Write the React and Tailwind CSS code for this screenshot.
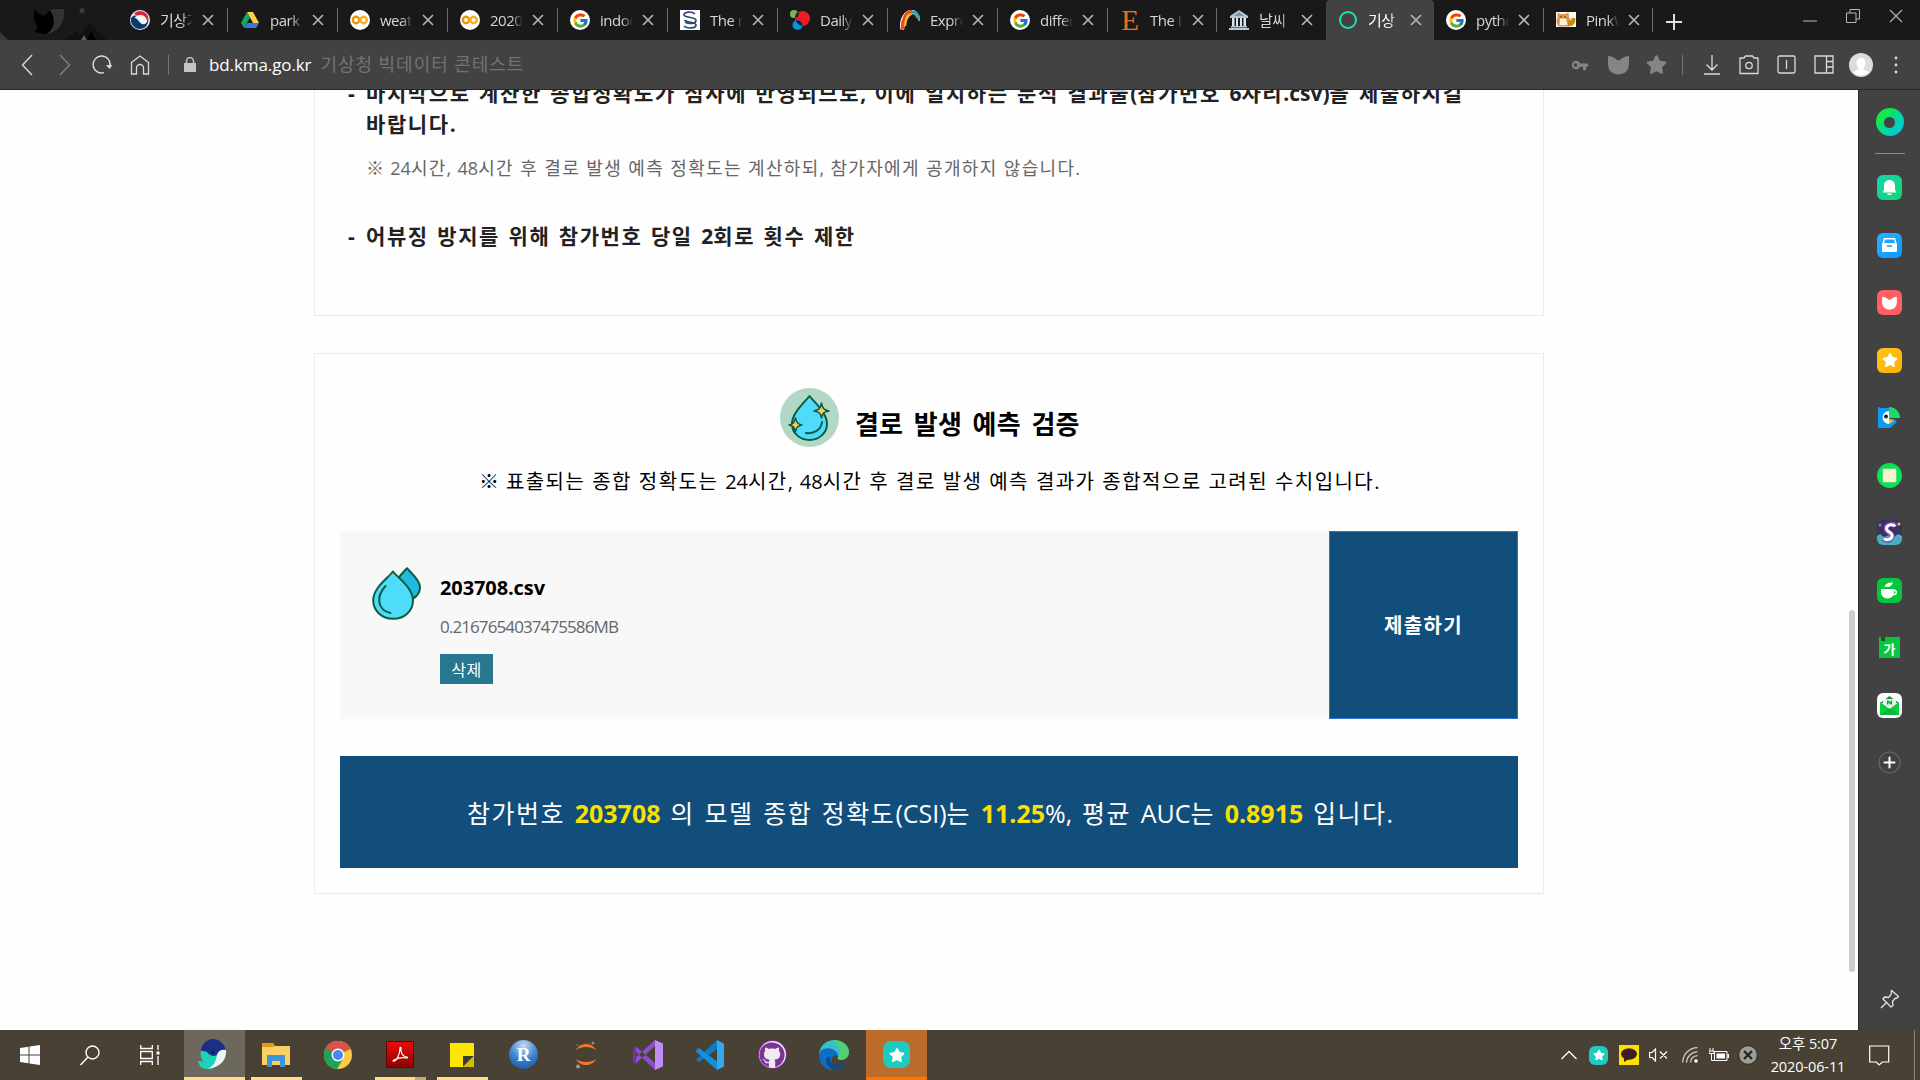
import React from "react";
import { FcGoogle } from "react-icons/fc";
import { FaGithub, FaStar } from "react-icons/fa";

const FONT = "font-['Open_Sans','Noto_Sans_CJK_KR',sans-serif]";

const Svg = ({ w, h, vb, children, className = "" }) => (
  <svg width={w} height={h || w} viewBox={vb || `0 0 ${w} ${h || w}`} fill="none" className={`block shrink-0 ${className}`}>
    {children}
  </svg>
);

/* Hangul runs take the letter spacing of the parent; Latin and digit runs stay tight. */
const Mixed = ({ text }) =>
  text.split(/([^\uac00-\ud7a3]+)/).map((run, i) =>
    i % 2 ? <span key={i} className="tracking-normal">{run}</span> : run
  );

/* ---------- favicons ---------- */
const Taegeuk = () => (
  <Svg w={20}>
    <circle cx="10" cy="10" r="10" fill="#f4f4f6" />
    <path d="M4 3.500A8.500 8.500 0 0 1 18.500 9c.3 2-1 5-1.500 5C18 8 14 4.500 10 5 7 5.300 5 5.500 4 3.500z" fill="#d8233a" />
    <path d="M1 8c-1 6 3 11 9 11 5 0 8.500-4 8-9-1 4-5 5.500-7.500 3C8 10 5 6 1 8z" fill="#0b3a70" />
    <path d="M1.500 8C3 5 6 5.500 8 6c-3 0-4 2-3 3-1-1-2-1-3.500-1z" fill="#0b3a70" />
  </Svg>
);
const Drive = () => (
  <Svg w={20}>
    <path d="M7 2h6l6 11h-6z" fill="#ffcf48" />
    <path d="M7 2l3 5.500L4 18l-3-5z" fill="#11a861" />
    <path d="M7 13h12l-3 5H4z" fill="#3777e3" />
  </Svg>
);
const Colab = () => (
  <Svg w={20}>
    <circle cx="10" cy="10" r="10" fill="#fff" />
    <circle cx="6" cy="10" r="3.200" stroke="#f09300" strokeWidth="2.400" />
    <circle cx="13.600" cy="10" r="3.200" stroke="#fbae17" strokeWidth="2.400" />
  </Svg>
);
const Google = () => (
  <span className="flex size-5 shrink-0 items-center justify-center rounded-full bg-white">
    <FcGoogle size={17} />
  </span>
);
const Dna = () => (
  <Svg w={20}>
    <path d="M0 0h20v20H0z" fill="#fff" />
    <path d="M15 4C12 1 4 1.500 4 5c0 3 12 1.500 12 5.500 0 3-7 4-11 1.500" stroke="#2b4a73" strokeWidth="1.700" />
    <path d="M4 16c3 3 12 2.500 12-1 0-3.500-9-2-11.500-5" stroke="#2b4a73" strokeWidth="1.700" />
  </Svg>
);
const Daily = () => (
  <Svg w={20}>
    <circle cx="4" cy="4" r="4" fill="#7ab55c" />
    <circle cx="12.500" cy="8.500" r="7.500" fill="#ee1c25" />
    <circle cx="7.500" cy="15" r="5" fill="#0b93d8" />
    <path d="M6 10.500a5 5 0 0 1 6.300 5.300A7.500 7.500 0 0 1 6 10.500z" fill="#101c40" />
    <path d="M5 6.500a8 8 0 0 1 3-5A4 4 0 0 1 5 8z" fill="#3c2415" />
  </Svg>
);
const Rainbow = () => (
  <Svg w={20}>
    <path d="M0 19C-1 9 4 1 10 0c5-1 9 3 10 8l-1 4C18 6 14 2 11 5 7 8 5 14 4 20z" fill="#fff" />
    <path d="M2.500 19.500C2 10 6 1.500 12 1.500" stroke="#f04a23" strokeWidth="3.500" />
    <path d="M5 16C5.500 9 8 4 12 3.500" stroke="#fbb71b" strokeWidth="2.500" />
    <path d="M11 2c4-1 7 2 8 7" stroke="#1d9ad6" strokeWidth="2.500" />
    <path d="M10 4c3-1.500 6 0 7 4" stroke="#6dbb45" strokeWidth="1.500" />
  </Svg>
);
const Elsevier = () => (
  <span className="flex size-5 shrink-0 items-center justify-center font-['Liberation_Serif',serif] text-[29px] leading-5 text-[#e9711c]">E</span>
);
const Bank = () => (
  <Svg w={20}>
    <path d="M10 0l9 6v2H1V6z" fill="#b7c8d4" />
    <path d="M10 2l5 4H5z" fill="#7d95a6" />
    <path d="M3 8h2.500v8H3zM7 8h2v8H7zM11 8h2v8h-2zM14.500 8H17v8h-2.500z" fill="#dbe5ec" />
    <path d="M2 16h16v1.500H2zM0 18h20v2H0z" fill="#b7c8d4" />
  </Svg>
);
const Ring = () => (
  <Svg w={20}>
    <circle cx="10" cy="10" r="8" stroke="#1fe0b0" strokeWidth="2" />
  </Svg>
);
const Cat = () => (
  <Svg w={20}>
    <path d="M0 2h20v15H0z" fill="#fdfbf6" />
    <path d="M1.500 2.500l3 1.500h5l3-1.500.5 5c2.500 3 2 6.500 0 9H2.500C0 13 0 10 1.500 8z" fill="#e0954a" />
    <path d="M4 8.500h6l1.500 6.500h-8z" fill="#fff0dc" />
    <path d="M12 11c2 .5 3-1 4-3h3c1.500 3-1 7-4 8h-3z" fill="#c98a18" />
    <circle cx="5" cy="7" r=".8" fill="#4a2b12" />
    <circle cx="9" cy="7" r=".8" fill="#4a2b12" />
  </Svg>
);

const tabs = [
  { icon: Taegeuk, text: "기상기", w: "w-[110px]" },
  { icon: Drive, text: "park", w: "w-[110px]" },
  { icon: Colab, text: "weath", w: "w-[110px]" },
  { icon: Colab, text: "2020", w: "w-[110px]" },
  { icon: Google, text: "indoo", w: "w-[110px]" },
  { icon: Dna, text: "The r", w: "w-[110px]" },
  { icon: Daily, text: "Daily", w: "w-[110px]" },
  { icon: Rainbow, text: "Expre", w: "w-[110px]" },
  { icon: Google, text: "differ", w: "w-[110px]" },
  { icon: Elsevier, text: "The I", w: "w-[109px]" },
  { icon: Bank, text: "날씨", w: "w-[109px]", last: true },
  { icon: Ring, text: "기상", w: "w-[108px]", active: true, last: true },
  { icon: Google, text: "pytho", w: "w-[110px]" },
  { icon: Cat, text: "PinkW", w: "w-[109px]" },
];

const Tab = ({ icon: Icon, text, w, active, last }) => (
  <div className={`flex h-10 shrink-0 items-center pl-3 ${w} ${active ? "rounded-t-sm bg-[#424242] text-white" : "text-[#d6d6d6]"}`}>
    <Icon />
    <span className="ml-[10px] w-[33px] shrink-0 overflow-hidden whitespace-nowrap text-[15px] leading-10 tracking-[-0.5px] [mask-image:linear-gradient(to_right,#000_65%,transparent)]">
      {text}
    </span>
    <Svg w={12} className="ml-[9px]">
      <path d="M1 1l10 10M11 1L1 11" stroke="#b8b8b8" strokeWidth="1.600" />
    </Svg>
    {!last && <span className="ml-auto h-6 w-px bg-[#6a6a6a]" />}
  </div>
);

const TabBar = () => (
  <div className="flex h-10 bg-[#191919]">
    <Svg w={118} h={40}>
      <path d="M0 32l8 8H0z" fill="#3a3a3a" />
      <path d="M64 40l12-9 4 4 9-12 18 17z" fill="#101010" />
      <path d="M81 40l3-5 3 5z" fill="#5a5a5a" />
      <path d="M87 40l4-9 5 9z" fill="#000" />
      <circle cx="82" cy="10.500" r="2.600" fill="#3a3a3a" />
      <path d="M35 9c3 5 8 8 11 6 4-7 10-7 18-6 2 13-5 25-18 25-6 0-9-2-12-3 3-1 4-3 3-6-4-4-4-11-2-16z" fill="#000" />
      <path d="M50 10c5-2 10-1 14-1 2 12-5 24-17 25 7-6 10-13 3-24z" fill="#333" />
    </Svg>
    {tabs.map((t, i) => (
      <Tab key={i} {...t} />
    ))}
    <Svg w={16} className="mt-[14px] ml-[13px]">
      <path d="M8 0v16M0 8h16" stroke="#e0e0e0" strokeWidth="2" />
    </Svg>
    <div className="mr-[17px] ml-auto flex gap-[29px]">
      <Svg w={14} className="mt-[14px]">
        <path d="M0 7h14" stroke="#a0a0a0" strokeWidth="1.200" />
      </Svg>
      <Svg w={14} className="mt-[9px]">
        <path d="M.5 4h9.500v9.500H.5zM4 4V.5h9.500V10H10" stroke="#b8b8b8" />
      </Svg>
      <Svg w={14} className="mt-[9px]">
        <path d="M1 1l12 12M13 1L1 13" stroke="#b8b8b8" strokeWidth="1.100" />
      </Svg>
    </div>
  </div>
);

const shield = "M0 1c3 .2 6 1.200 8.500 3.600q2 1.600 4 0C15 2.200 18 1.200 21 1v8c0 6.500-4.500 10.500-10.500 10.500S0 15.500 0 9z";

const ToolBar = () => (
  <div className="flex h-[50px] items-center border-b border-[#262626] bg-[#424242]">
    <Svg w={12} h={22} className="ml-[21px]">
      <path d="M11 1L1.500 11 11 21" stroke="#dadada" strokeWidth="1.400" />
    </Svg>
    <Svg w={12} h={22} className="ml-[26px]">
      <path d="M1 1l9.500 10L1 21" stroke="#808080" strokeWidth="1.400" />
    </Svg>
    <Svg w={22} className="ml-[20px]">
      <path d="M13 18.700A8.500 8.500 0 1 1 19 12" stroke="#dadada" strokeWidth="1.400" />
      <path d="M15 11h6.500L18.500 15z" fill="#dadada" />
    </Svg>
    <Svg w={20} className="ml-[17px]">
      <path d="M1.500 7.500L10 1l8.500 6.500V19h-5v-6a3.500 3.500 0 0 0-7 0v6h-5z" stroke="#dadada" strokeWidth="1.300" />
    </Svg>
    <span className="ml-[18px] h-5 w-px bg-[#777]" />
    <Svg w={12} h={15} className="ml-[15px]">
      <path d="M0 6h12v9H0z" fill="#c4c4c4" />
      <path d="M2.500 6V4a3.500 3.500 0 0 1 7 0v2" stroke="#c4c4c4" strokeWidth="1.500" />
    </Svg>
    <span className="ml-[13px] text-[17px] leading-6 tracking-[-0.1px] whitespace-nowrap text-white">bd.kma.go.kr</span>
    <span className="mb-[2px] ml-[9px] text-[18px] leading-6 tracking-[0.95px] whitespace-nowrap text-[#737373]">기상청 빅데이터 콘테스트</span>
    <div className="ml-auto flex items-center">
      <Svg w={18} h={12} className="mr-[20px]">
        <path d="M6 1.700a4.300 4.300 0 1 0 0 8.600c2 0 3.400-1 4-2.600h3V11h3V7.700h2V4.500h-8C9.400 2.800 8 1.700 6 1.700z" fill="#858585" />
        <circle cx="5.500" cy="6" r="1.800" fill="#424242" />
      </Svg>
      <Svg w={21} h={20} className="mr-[17px]"><path d={shield} fill="#858585" /></Svg>
      <FaStar size={21} color="#858585" className="mr-[15px]" />
      <span className="mr-[20px] h-5 w-px bg-[#777]" />
      <Svg w={18} h={20} className="mr-[18px]">
        <path d="M9 0v14.500M3.500 9.500L9 15l5.500-5.500M1 19h16" stroke="#dadada" strokeWidth="1.300" />
      </Svg>
      <Svg w={20} className="mr-[18px]">
        <path d="M1 3h4l1.500-2h7L15 3h4v15.500H1z" stroke="#dadada" strokeWidth="1.300" strokeLinejoin="round" />
        <circle cx="10" cy="10.500" r="3.200" stroke="#dadada" strokeWidth="1.300" />
      </Svg>
      <Svg w={19} className="mr-[18px]">
        <rect x="1" y="1" width="17" height="17" rx="1.500" stroke="#dadada" strokeWidth="1.300" />
        <path d="M9.500 5v9" stroke="#dadada" strokeWidth="1.300" />
      </Svg>
      <Svg w={20} h={19} className="mr-[15px]">
        <path d="M1 1h18v17H1zM12.500 1v17M12.500 6.500H19M12.500 12H19" stroke="#dadada" strokeWidth="1.300" />
      </Svg>
      <Svg w={24} className="mr-[21px]">
        <circle cx="12" cy="12" r="12" fill="#dcdcdc" />
        <path d="M12 5c3 0 4.500 2 4.500 5 0 2-1 3.500-2 4.500v2c2 1 4.500 1.500 5 3A12 12 0 0 1 4.500 20c.5-2 3-2.500 5-3.500v-2c-1-1-2-2.500-2-4.500 0-3 1.500-5 4.500-5z" fill="#fff" />
      </Svg>
      <Svg w={4} h={18} className="mr-[22px]">
        <circle cx="2" cy="2" r="1.400" fill="#dadada" />
        <circle cx="2" cy="9" r="1.400" fill="#dadada" />
        <circle cx="2" cy="16" r="1.400" fill="#dadada" />
      </Svg>
    </div>
  </div>
);

/* ---------- page body ---------- */
const SparkleDrop = () => (
  <Svg w={59} className="mt-[34px]">
    <circle cx="29.500" cy="29.500" r="29.500" fill="#b0d8c4" />
    <path d="M29.500 8C24 15 12 25 12 36c0 9 8 16 17.500 16S47 45 47 36c0-11-12-21-17.500-28z" fill="#4fdcfa" stroke="#0b5c40" strokeWidth="2" strokeLinejoin="round" />
    <path d="M26 45c8 1 15-3 16-11" stroke="#0b5c40" strokeWidth="2" strokeLinecap="round" />
    <path d="M41.500 15c1 5 2 7 7.500 8-5.500 1-6.500 2-7.500 7-1-5-2-6-7.500-7 5.500-1 6.500-3 7.500-8zM15.500 30c1 4.500 2 6 6.500 7-4.500 1-5.500 2-6.500 6.500C14.500 39 13.500 38 9 37c4.500-1 5.500-2.500 6.500-7z" fill="#ffca5c" stroke="#0b5c40" strokeWidth="1.500" strokeLinejoin="round" />
  </Svg>
);
const TwinDrop = () => (
  <Svg w={50} h={53} className="mt-9 ml-8">
    <path d="M35 1.200C31 6 22 13 22 22s7 12 14 11 12-6 12-13S39 6 35 1.200z" fill="#21b9dd" stroke="#0b5c40" strokeWidth="2" strokeLinejoin="round" />
    <path d="M21 4.500C15 12 1.200 21 1.200 33.500c0 10 8.500 18.300 20 18.300S41 43.500 41 33.500C41 21 27 12 21 4.500z" fill="#4fdcfa" stroke="#0b5c40" strokeWidth="2" strokeLinejoin="round" />
    <path d="M13.500 19C4 29 5 43 18.500 46" stroke="#0b5c40" strokeWidth="2" strokeLinecap="round" />
  </Svg>
);

const Num = ({ children }) => <b className="font-bold tracking-normal text-[#f8e000]">{children}</b>;

const Page = () => (
  <main className="flex h-[940px] grow flex-col overflow-hidden bg-[#fefefe] pl-[314px] text-black">
    <section className="h-[226px] w-[1230px] shrink-0 border border-t-0 border-[#ebebeb]">
      <div className="-mt-[12px] flex text-[21px] leading-[31px] font-bold tracking-[1.6px] [word-spacing:3px] whitespace-nowrap text-[#222]">
        <span className="ml-[33px] w-[18px]">-</span>
        <p>
          <Mixed text="마지막으로 계산한 종합정확도가 심사에 반영되므로, 이에 일치하는 분석 결과물(참가번호 6자리.csv)을 제출하시길" />
          <br />
          <Mixed text="바랍니다." />
        </p>
      </div>
      <p className="mt-[12px] ml-[51px] text-[18px] leading-[32px] tracking-[1.3px] [word-spacing:1.6px] whitespace-nowrap text-[#666]">
        <Mixed text="※ 24시간, 48시간 후 결로 발생 예측 정확도는 계산하되, 참가자에게 공개하지 않습니다." />
      </p>
      <div className="mt-[37px] flex text-[21px] leading-[31px] font-bold tracking-[1.6px] [word-spacing:3px] whitespace-nowrap text-[#222]">
        <span className="ml-[33px] w-[18px]">-</span>
        <span><Mixed text="어뷰징 방지를 위해 참가번호 당일 2회로 횟수 제한" /></span>
      </div>
    </section>
    <section className="mt-[37px] h-[541px] w-[1230px] shrink-0 border border-[#ebebeb] px-[25px]">
      <div className="flex h-[93px] pl-[440px]">
        <SparkleDrop />
        <h2 className="mt-[53px] ml-[16px] text-[26px] leading-[34px] font-bold tracking-[0.2px] [word-spacing:3.6px] whitespace-nowrap">결로 발생 예측 검증</h2>
      </div>
      <p className="mt-[20px] pl-[139px] text-[20px] leading-[30px] tracking-[1.45px] [word-spacing:1.7px] whitespace-nowrap">
        <Mixed text="※ 표출되는 종합 정확도는 24시간, 48시간 후 결로 발생 예측 결과가 종합적으로 고려된 수치입니다." />
      </p>
      <div className="mt-[34px] flex h-[188px] bg-[#f8f8f8]">
        <TwinDrop />
        <div className="ml-[18px] flex flex-col items-start whitespace-nowrap">
          <span className="mt-[42px] text-[20px] leading-[30px] font-bold tracking-[-0.1px]">203708.csv</span>
          <span className="mt-[11px] text-[17px] leading-[26px] tracking-[-0.9px] text-[#666]">0.2167654037475586MB</span>
          <button className="mt-[14px] flex h-[30px] w-[53px] items-center justify-center bg-[#26778f] pt-[2px] text-[16px] tracking-[0.5px] text-white">삭제</button>
        </div>
        <button className="ml-auto flex h-[188px] w-[189px] items-center justify-center border border-[#2d74d2] bg-[#124e7c] pt-[2px] text-[20px] font-bold tracking-[1.4px] text-white">
          제출하기
        </button>
      </div>
      <div className="mt-[37px] flex h-[112px] items-center bg-[#124e7c] pt-[4px] pl-[127px] text-[25px] tracking-[1.5px] [word-spacing:3.2px] whitespace-nowrap text-white">
        <p>
          <Mixed text="참가번호 " /><Num>203708</Num><Mixed text=" 의 모델 종합 정확도(CSI)는 " /><Num>11.25</Num>
          <Mixed text="%, 평균 AUC는 " /><Num>0.8915</Num><Mixed text=" 입니다." />
        </p>
      </div>
    </section>
  </main>
);

/* ---------- right side panel ---------- */
const Tile = ({ bg, children }) => (
  <span className={`flex size-[25px] items-center justify-center overflow-hidden rounded-md ${bg}`}>{children}</span>
);

const SideBar = () => (
  <aside className="flex w-[62px] shrink-0 flex-col items-center border-l border-[#2a2a2a] bg-[#424242]">
    <span className="mt-[18px] flex size-7 items-center justify-center rounded-full bg-gradient-to-br from-[#14e850] from-30% to-[#1cb8f4]">
      <span className="size-[11px] rounded-full bg-[#424242]" />
    </span>
    <span className="mt-[17px] h-px w-[30px] bg-[#8a8a8a]" />
    <div className="mt-[21px] flex flex-col items-center gap-[32.500px]">
      <Tile bg="bg-gradient-to-br from-[#17d3ae] to-[#16d66c]">
        <Svg w={15} h={16}><path d="M7.500 0C4 0 2 2.500 2 6v4L.5 12.500h14L13 10V6c0-3.500-2-6-5.500-6zM5 13.500h5C9.500 15.500 5.500 15.500 5 13.500z" fill="#fff" /></Svg>
      </Tile>
      <Tile bg="bg-gradient-to-br from-[#2bb0ff] to-[#0698ff]">
        <Svg w={15} h={14}>
          <path d="M1 6l1.500-5.200h10L14 6" stroke="#fff" strokeWidth="1.400" />
          <rect x="0" y="5" width="15" height="9" rx="1" fill="#fff" />
          <path d="M5 8h5" stroke="#0698ff" strokeWidth="1.400" />
        </Svg>
      </Tile>
      <Tile bg="bg-[#ff5f62]"><Svg w={15} h={14} vb="0 0 21 20"><path d={shield} fill="#fff" /></Svg></Tile>
      <Tile bg="bg-gradient-to-br from-[#fdc51b] to-[#ffae00]"><FaStar size={16} color="#fff" /></Tile>
      <Svg w={25}>
        <path d="M1 2l4 1h8v20H1V8z" fill="#0c9bf4" />
        <path d="M13 14h4l3 3-7 6z" fill="#0c9bf4" />
        <path d="M12 2a11 11 0 0 1 11 11H12z" fill="#1fd96b" />
        <path d="M12 6a6.500 6.500 0 0 0 0 13z" fill="#fff" />
        <circle cx="9" cy="11.500" r="2" fill="#222" />
        <path d="M12 14l5 2-5 3z" fill="#fcc016" />
      </Svg>
      <Svg w={25}>
        <circle cx="12.500" cy="12.500" r="12.500" fill="#08e254" />
        <path d="M6 6h13v13H6z" fill="#fbf3cf" stroke="#e2eac0" strokeWidth=".6" />
      </Svg>
      <Tile bg="bg-[#39335e]">
        <Svg w={25}>
          <path d="M0 16l3-2 4 3 5-2 5 2 4-3 4 2v9H0z" fill="#46b0c0" />
          <circle cx="3" cy="5" r="1.500" fill="#8e7fb8" />
          <circle cx="22" cy="4" r="1.500" fill="#f0c645" />
          <path d="M18.500 6.500C17 3 9 4 9 8.500s7 3.500 6 8c-1 4-6 4.500-8.500 2" stroke="#8a3fb5" strokeWidth="5" />
          <path d="M18 6.500C16 3.500 9.500 4.500 9.500 8.500s7 4 5.500 8c-1 3.500-6 4-8 2" stroke="#fff" strokeWidth="3" />
        </Svg>
      </Tile>
      <Tile bg="bg-[#06c73c]">
        <Svg w={17} h={17}>
          <path d="M0 7h13v2a6.500 6.500 0 0 1-6.500 7.500A6.500 6.500 0 0 1 0 9z" fill="#fff" />
          <path d="M3.500 4.500C5 1 8 .5 12 .5 11 4 8 6 3.500 4.500z" fill="#fff" />
          <path d="M12.500 8.500c4-1 4 4.500-1 4" stroke="#fff" strokeWidth="1.600" />
        </Svg>
      </Tile>
      <span className="flex size-[25px] items-center justify-center">
        <span className="relative flex size-[21px] items-center justify-center bg-[#06c73c] pt-[3px] text-[13px] leading-none font-bold text-white">
          가
          <span className="absolute -top-px left-[2px] h-[5px] w-1 bg-[#2c4a33]" />
        </span>
      </span>
      <Tile bg="bg-white">
        <Svg w={19} h={19}>
          <path d="M0 7l9.500-7L19 7z" fill="#079a34" />
          <path d="M3 3h13v8H3z" fill="#eee" />
          <path d="M7 8.500v-4h1.500L10.500 6.500v-2H12v4h-1.500l-2-2.200v2.200z" fill="#05a23a" />
          <path d="M0 6l9.500 7L19 6v13H0z" fill="#06cf42" />
          <path d="M0 19l9.500-7L19 19z" fill="#07b93b" />
        </Svg>
      </Tile>
      <Svg w={25}>
        <circle cx="12.500" cy="12.500" r="10.500" stroke="#666" strokeWidth="1.200" />
        <path d="M12.500 7.500v10M7.500 12.500h10" stroke="#fff" strokeWidth="2" strokeLinecap="round" />
      </Svg>
    </div>
    <Svg w={20} className="mt-auto mb-[21px]">
      <path d="M11.500 1.500l7 6-1.500 1.500-2 .5-2.500 3 .5 4-2 1.500-8-8L4.500 8l4 .5L11 5.500zM6.500 13.500L1 19" stroke="#e6e6e6" strokeWidth="1.300" strokeLinejoin="round" />
    </Svg>
  </aside>
);

/* ---------- taskbar icons ---------- */
const Windows = () => (
  <Svg w={20}><path d="M0 3l8.500-1.200v7.700H0zM9.500 1.600L20 0v9.500H9.500zM0 10.500h8.500v7.700L0 17zM9.500 10.500H20V20L9.500 18.400z" fill="#fff" /></Svg>
);
const Search = () => (
  <Svg w={20} h={21}><circle cx="12.500" cy="7.500" r="6.500" stroke="#fff" strokeWidth="1.400" /><path d="M8 12L.5 20" stroke="#fff" strokeWidth="1.400" /></Svg>
);
const TaskView = () => (
  <Svg w={20} h={20}><path d="M.7 0v3.500h11.600V0M.7 20v-3.500h11.600V20M.7 6.500h11.600v7H.7zM18 0v5M18 11v9" stroke="#fff" strokeWidth="1.300" /><path d="M16.500 6.500h3v3h-3z" fill="#fff" /></Svg>
);
const Whale = () => (
  <Svg w={30} className="mr-[3px]">
    <path d="M3 12c-1 4 0 8 3 11-2-1-4-1-6-1 1 5 4 8 9 8 8 0 13-4 12-14L17 11z" fill="#1fd3bb" />
    <path d="M3 12C3 5 9 0 15 0c6 0 11 4 13 11-4 0-6 1-8 4-4 4-9 1-11-2-2-1-4-1-6-1z" fill="#1b2f86" />
    <path d="M28 11c1 9-5 17-18 19 7-4 8-9 9-14 1-4 4-6 9-5z" fill="#e9f5f4" />
    <circle cx="15" cy="13.500" r="1.200" fill="#0c1440" />
  </Svg>
);
const Explorer = () => (
  <Svg w={28} h={24}>
    <path d="M0 0h11l2 3h15v19H0z" fill="#fbd067" /><path d="M0 0h11l2 3-2 1H0z" fill="#e09b12" />
    <path d="M5 12h18v12h-5v-6h-8v6H5z" fill="#3d94d8" />
  </Svg>
);
const Chrome = () => (
  <Svg w={28}>
    <circle cx="14" cy="14" r="14" fill="#fbcc3f" />
    <path d="M14 14L1.500 7.500A14 14 0 0 1 26.500 8z" fill="#dd5246" />
    <path d="M1.800 7A14 14 0 0 0 13 28l6-10-5-4z" fill="#1fa05c" />
    <circle cx="14" cy="14" r="6.500" fill="#fff" /><circle cx="14" cy="14" r="5" fill="#4688f1" />
  </Svg>
);
const Acrobat = () => (
  <span className="flex h-[27px] w-[28px] items-center justify-center border border-[#5f0505] bg-gradient-to-b from-[#f00a0a] to-[#8b0303]">
    <Svg w={18}><path d="M2 15c3 1 7-6 7-13 0-1 1-1 1 0-1 4 2 9 6 9 1 .5 0 1.500-1 1-4-1-8 0-11 1.500-1.500 1-2 1-2 1.500z" stroke="#fff" strokeWidth="1.200" /></Svg>
  </span>
);
const Sticky = () => (
  <Svg w={24}><path d="M0 0h24v24H0z" fill="#ffe600" /><path d="M13 24V13h11z" fill="#3c3c34" /><path d="M13 24l11-11v11z" fill="#d6bb00" /></Svg>
);
const RStudio = () => (
  <span className="mr-px flex size-[29px] items-center justify-center rounded-full bg-[radial-gradient(circle_at_50%_20%,#c5dcf5,#3d82cf_50%,#124f9f)] font-['Liberation_Serif',serif] text-[19px] leading-none font-bold text-white">R</span>
);
const Jupyter = () => (
  <Svg w={22} h={28}>
    <path d="M1 9c4-8 16-8 20 0-5-4-15-4-20 0zM1 18c4 8 16 8 20 0-5 4-15 4-20 0z" fill="#f37726" />
    <circle cx="18" cy="2" r="1.600" fill="#8a8a8a" /><circle cx="3" cy="25.500" r="2" fill="#9a9a9a" /><circle cx="2.500" cy="4" r="1" fill="#777" />
  </Svg>
);
const VisualStudio = () => (
  <Svg w={30}>
    <path d="M0 8l3-1.500L23 24l-1 6L0 9zM0 22l3 1.500L22 6V0L0 20z" fill="#8a4fd0" />
    <path d="M0 8l3-1.500v17L0 22z" fill="#6a34ac" />
    <path d="M22 0l8 3.500v23L22 30z" fill="#c08df7" />
  </Svg>
);
const VSCode = () => (
  <Svg w={30}>
    <path d="M1 19.500L22 0v9L4 22z" fill="#0c7dc4" /><path d="M1 10.500l3-2.500 18 13.500V30L1 11.500z" fill="#148fdb" />
    <path d="M22 0l7 3.500v23L22 30z" fill="#34a9f1" />
  </Svg>
);
const Github = () => (
  <span className="flex size-[29px] items-center justify-center rounded-full bg-[#7c3393]">
    <span className="flex size-[27px] items-center justify-center overflow-hidden rounded-full bg-[#efe9f2]"><FaGithub size={26} color="#7c3393" /></span>
  </span>
);
const Edge = () => (
  <Svg w={30}>
    <path d="M0 14C1 5 8 0 15 0c9 0 15 6 15 12 0 5-4 8-8 8-3 0-4-1-3-3C20 12 8 7 0 14z" fill="#35c1c9" />
    <path d="M15 0c9 0 15 6 15 12 0 5-4 8-8 8-3 0-4-1-3-3 5-7-1-12-4-17z" fill="#5ad455" opacity=".75" />
    <path d="M0 15C0 9 8 7 13 9c5 2 6 5 6 7-9-3-9 9 2 13-11 4-21-3-21-14z" fill="#0d6fc4" />
    <path d="M11 16c-2 7 5 12 17 7-3 5-7 7-12 7-9-2-12-12-5-14z" fill="#114a8b" />
  </Svg>
);
const StarTile = ({ big }) => (
  <span className={`flex items-center justify-center bg-[#1dcbc0] ${big ? "size-[27px] rounded-lg" : "size-[19px] rounded-md"}`}>
    <FaStar size={big ? 16 : 12} color="#fff" />
  </span>
);

const apps = [
  { icon: Explorer, line: "w-[51px] bg-[#fddc8c]" },
  { icon: Chrome },
  { icon: Acrobat, line: "w-[51px] border-r-[11px] border-[#c4ab72] bg-[#fddc8c]" },
  { icon: Sticky, line: "w-[51px] bg-[#fddc8c]" },
  { icon: RStudio },
  { icon: Jupyter },
  { icon: VisualStudio },
  { icon: VSCode },
  { icon: Github },
  { icon: Edge },
];

const TaskBar = () => (
  <footer className="flex h-[50px] bg-[#484134] text-white">
    <div className="flex w-[60px] items-center justify-center"><Windows /></div>
    <div className="flex w-[60px] items-center justify-center"><Search /></div>
    <div className="flex w-[60px] items-center justify-center"><TaskView /></div>
    <div className="ml-1 flex w-[61px] items-center justify-center border-b-[3px] border-[#fddc8c] bg-[#6d685c]"><Whale /></div>
    {apps.map(({ icon: Icon, line }, i) => (
      <div key={i} className="flex w-[62px] flex-col items-center">
        <div className="flex h-[47px] items-center pt-[2px]"><Icon /></div>
        {line && <span className={`h-[3px] ${line}`} />}
      </div>
    ))}
    <div className="ml-px flex w-[61px] items-center justify-center border-b-[3px] border-[#ff7300] bg-[#bb6c2b] pt-[2px]"><StarTile big /></div>
    <div className="ml-auto flex items-center">
      <Svg w={16} h={10}><path d="M.5 9L8 1.500 15.500 9" stroke="#fff" strokeWidth="1.300" /></Svg>
      <span className="ml-[12px]"><StarTile /></span>
      <span className="ml-[11px] flex size-5 items-center justify-center bg-[#fbe000]">
        <Svg w={16} h={14}><ellipse cx="8" cy="6" rx="8" ry="5.700" fill="#3b1e1e" /><path d="M3 9l0 5 5-3z" fill="#3b1e1e" /></Svg>
      </span>
      <Svg w={19} h={14} className="ml-[10px]">
        <path d="M.6 4.500h2.500L6.500 1v12L3.100 9.500H.6zM11 3.500l7 7M18 3.500l-7 7" stroke="#fff" strokeWidth="1.200" />
      </Svg>
      <Svg w={16} className="ml-[14px]">
        <path d="M.7 15.500C1 7 7 1 15.500.7M4.500 15.500c.3-6 5-10.500 11-10.800M8.500 15.500c.3-4 3-6.500 7-6.800" stroke="#cfcdc8" strokeWidth="1.300" />
        <circle cx="14" cy="14" r="1.800" fill="#fff" />
      </Svg>
      <Svg w={20} h={14} className="ml-[11px]">
        <path d="M5.500 3.500H18v9H5.500z" stroke="#fff" /><path d="M7.500 5.500H16v5H7.500z" fill="#fff" /><path d="M18.500 6h1.500v4h-1.500z" fill="#fff" />
        <path d="M1 0v3M4 0v3M0 3h5v2.500H0zM2.500 5v7.500h3" stroke="#fff" />
      </Svg>
      <Svg w={20} className="ml-[9px]">
        <circle cx="10" cy="10" r="9.300" fill="#a09d96" stroke="#2c2a25" strokeWidth="1" /><path d="M6 6l8 8M14 6l-8 8" stroke="#222" strokeWidth="2.200" />
      </Svg>
      <div className="ml-[10px] flex w-[80px] flex-col items-center text-[14.5px] leading-[23px] tracking-[-0.1px] whitespace-nowrap">
        <span>오후 5:07</span>
        <span>2020-06-11</span>
      </div>
      <Svg w={21} h={21} className="ml-[21px]">
        <path d="M.7 1h19v16h-6.500l-3 3-3-3H.7z" stroke="#fff" strokeWidth="1.200" />
      </Svg>
    </div>
    <span className="mr-[5px] ml-[24px] h-full w-px bg-[#8b877e]" />
  </footer>
);

export default function App() {
  return (
    <div className={`flex h-[1080px] w-[1920px] flex-col overflow-hidden ${FONT}`}>
      <TabBar />
      <ToolBar />
      <div className="flex h-[940px]">
        <Page />
        <div className="w-[9px] shrink-0 bg-[#fefefe] pt-[520px]">
          <div className="h-[362px] w-1.5 rounded-full bg-[#cdcdcd]" />
        </div>
        <SideBar />
      </div>
      <TaskBar />
    </div>
  );
}
